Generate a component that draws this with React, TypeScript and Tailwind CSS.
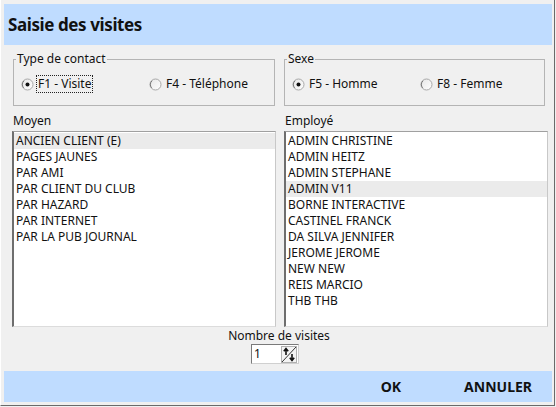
import React from "react";

const moyens = [
  "ANCIEN CLIENT (E)",
  "PAGES JAUNES",
  "PAR AMI",
  "PAR CLIENT DU CLUB",
  "PAR HAZARD",
  "PAR INTERNET",
  "PAR LA PUB JOURNAL",
];

const employes = [
  "ADMIN CHRISTINE",
  "ADMIN HEITZ",
  "ADMIN STEPHANE",
  "ADMIN V11",
  "BORNE INTERACTIVE",
  "CASTINEL FRANCK",
  "DA SILVA JENNIFER",
  "JEROME JEROME",
  "NEW NEW",
  "REIS MARCIO",
  "THB THB",
];

function Radio({ checked }: { checked?: boolean }) {
  return (
    <svg width="13" height="13" viewBox="0 0 13 13" className="shrink-0">
      <defs>
        <linearGradient id="rg" x1="0" y1="0" x2="1" y2="1">
          <stop offset="0" stopColor="#e6e6e6" />
          <stop offset="1" stopColor="#ffffff" />
        </linearGradient>
      </defs>
      <circle cx="6.5" cy="6.5" r="5.5" fill="url(#rg)" stroke="#a8a8a8" strokeWidth="1" />
      <path d="M2.6 9.8 A5 5 0 0 1 3 2.8" stroke="#7a7a7a" strokeWidth="1" fill="none" />
      {checked && <circle cx="6.5" cy="6.5" r="2" fill="#111" />}
    </svg>
  );
}

function Group({ title, a, b, focus }: { title: string; a: string; b: string; focus?: boolean }) {
  return (
    <fieldset className="border border-[#b4b4b4] px-0">
      <legend className="ml-[2px] px-[1px] text-[12px] leading-[12px] text-[#111]">{title}</legend>
      <div className="flex items-center h-[40px] pb-[2px] pl-[7px]">
        <div className="flex items-center gap-[3px] w-[128px]">
          <Radio checked />
          <span className={focus ? "outline-1 outline-dotted outline-[#222] px-[1px] leading-[16px]" : "px-[1px] leading-[16px]"}>
            {a}
          </span>
        </div>
        <div className="flex items-center gap-[4px]">
          <Radio />
          <span className="leading-[16px]">{b}</span>
        </div>
      </div>
    </fieldset>
  );
}

function ListBox({ items, selected }: { items: string[]; selected: number }) {
  return (
    <div className="h-[196px] bg-white border-t border-t-[#a0a0a0] border-l-2 border-l-[#6e6e6e] border-r border-r-[#c8c8c8] border-b border-b-[#dcdcdc] pt-[1px]">
      {items.map((it, i) => (
        <div
          key={it}
          className={"h-[16px] leading-[16px] pl-[2px] text-[12px] " + (i === selected ? "bg-[#ebebeb]" : "")}
        >
          {it}
        </div>
      ))}
    </div>
  );
}

function Spin() {
  return (
    <svg width="16" height="17" viewBox="0 0 16 17" className="shrink-0">
      <rect x="0.5" y="0.5" width="15" height="16" fill="#f4f4f4" stroke="#b0b0b0" />
      <line x1="1" y1="16" x2="15" y2="1" stroke="#333" strokeWidth="1" />
      <path d="M5 9 V3 M2.8 5.2 L5 2.6 L7.2 5.2" stroke="#111" strokeWidth="1.6" fill="none" />
      <path d="M11 8 V14 M8.8 11.8 L11 14.4 L13.2 11.8" stroke="#111" strokeWidth="1.6" fill="none" />
    </svg>
  );
}

export default function App() {
  return (
    <div
      className="w-[556px] h-[407px] bg-[#f0f0f0] text-[#111] overflow-hidden"
      style={{ fontFamily: '"Noto Sans", "Open Sans", sans-serif' }}
    >
      <div className="w-[555px] h-[406px] border-r border-b border-[#6a6a6a] border-l border-l-white pt-[4px] pl-[3px] pr-[2px] flex flex-col text-[12px]">
        <div className="h-[41px] bg-[#bfdcff] flex items-center pl-[4px]">
          <h1 className="text-[17px] font-bold tracking-[-0.4px] leading-none">Saisie des visites</h1>
        </div>

        <div className="flex mt-[8px] pl-[9px] gap-[9px]">
          <div className="w-[262px]">
            <Group title="Type de contact" a="F1 - Visite" b="F4 - Téléphone" focus />
          </div>
          <div className="w-[261px]">
            <Group title="Sexe" a="F5 - Homme" b="F8 - Femme" />
          </div>
        </div>

        <div className="flex mt-[8px] pl-[8px] gap-[8px]">
          <div className="w-[264px]">
            <div className="h-[17px] leading-[14px] pl-[1px]">Moyen</div>
            <ListBox items={moyens} selected={0} />
          </div>
          <div className="w-[264px]">
            <div className="h-[17px] leading-[14px] pl-[1px]">Employé</div>
            <ListBox items={employes} selected={3} />
          </div>
        </div>

        <div className="flex flex-col items-center mt-[1px]">
          <div className="leading-[16px] pl-[2px]">Nombre de visites</div>
          <div className="flex items-center w-[48px] h-[20px] bg-white border-t border-l border-t-[#7a7a7a] border-l-[#7a7a7a] border-b border-r border-b-[#d0d0d0] border-r-[#d0d0d0] pl-[2px] pr-[1px] ml-[-6px]">
            <span className="flex-1 leading-[16px]">1</span>
            <Spin />
          </div>
        </div>

        <div className="mt-[7px] h-[31px] bg-[#bfdcff] flex items-center justify-end font-bold text-[14px] pr-[20px]">
          <span className="mr-[63px]">OK</span>
          <span>ANNULER</span>
        </div>
      </div>
    </div>
  );
}
